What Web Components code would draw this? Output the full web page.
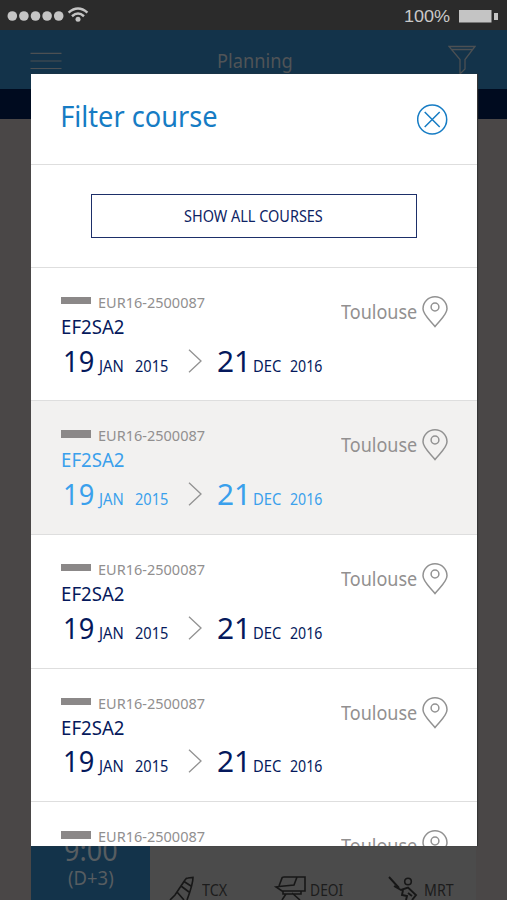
<!DOCTYPE html>
<html lang="en">

<head>
    <meta charset="utf-8">
    <meta name="viewport" content="width=device-width">
    <title>Planning</title>
    <style>
        body {
            margin: 0;
            height: 900px;
            overflow: hidden;
            font-family: "Noto Sans", "Open Sans", sans-serif;
            background: #4a4747;
        }
    </style>
</head>

<body>
    <planning-app></planning-app>

    <!-- Templates -->
    <template id="tmp-fit-text">
        <style>
            :host {
                display: inline-block;
                flex: none;
                line-height: 1;
                white-space: nowrap;
            }

            span {
                display: inline-block;
                transform-origin: 0 0;
            }
        </style>
        <span><slot></slot></span>
    </template>

    <template id="tmp-status">
        <style>
            :host {
                display: flex;
                justify-content: space-between;
                height: 30px;
                background: #2b2b2b;
                color: #c9c9c9;
                font-family: "Liberation Sans", Arial, sans-serif;
            }

            .right {
                display: flex;
                padding: 8px 9px 0 0;
                gap: 9px;
            }
        </style>
        <svg width="92" height="30" fill="#c4c4c4">
            <circle cx="12.3" cy="16" r="4.8" />
            <circle cx="23.9" cy="16" r="4.8" />
            <circle cx="35.5" cy="16" r="4.8" />
            <circle cx="47.1" cy="16" r="4.8" />
            <circle cx="58.7" cy="16" r="4.8" />
            <g fill="none" stroke="#c4c4c4" stroke-width="2.5">
                <path d="M68.6 12.6Q78 4.4 87.4 12.6" />
                <path d="M72 16.2Q78 10.8 84 16.2" />
            </g>
            <circle cx="78" cy="19.2" r="2.5" />
        </svg>
        <div class="right">
            <fit-text size="17" width="45">100%</fit-text>
            <svg width="39" height="16" fill="#c4c4c4">
                <rect y="2" width="32.5" height="12.5" />
                <rect x="35" y="5" width="4" height="7" />
            </svg>
        </div>
    </template>

    <template id="tmp-header">
        <style>
            :host {
                display: flex;
                justify-content: space-between;
                height: 59px;
                box-sizing: border-box;
                padding: 15px 31px 0 30px;
                background: #13334a;
                color: #505457;
            }

            fit-text {
                margin: 7px 1px 0 0;
            }

            svg {
                fill: none;
                stroke: #4c5053;
            }
        </style>
        <svg width="32" height="40">
            <path d="M.5 8.3H31.5M.5 16H31.5M.5 23.5H31.5" stroke-width="1.2" />
        </svg>
        <fit-text size="19" width="74">Planning</fit-text>
        <svg width="28" height="40" stroke-width="1.3">
            <path d="M1 1.5H27L17 14.5V24L12 29V14.5ZM3 4.5H25" />
        </svg>
    </template>

    <template id="tmp-agenda">
        <style>
            :host {
                display: flex;
                height: 65px;
                margin: 0 31px;
                background: #4b4b4b;
                color: #1c1c1c;
                overflow: hidden;
            }

            .time {
                display: flex;
                flex-direction: column;
                align-items: center;
                gap: 5px;
                width: 119px;
                background: #13334a;
                color: #575d61;
            }

            .crew {
                display: flex;
                flex: 1;
                padding: 39px 0 0 16px;
            }

            .crew fit-text {
                margin-top: 9px;
            }

            svg {
                fill: none;
                stroke: #171717;
                stroke-width: 1.6;
            }
        </style>
        <div class="time">
            <fit-text size="29" width="52">9:00</fit-text>
            <fit-text size="19" width="45">(D+3)</fit-text>
        </div>
        <div class="crew">
            <svg width="36" height="26">
                <path d="M4 26L9 21L19 6Q20 4 22 4L27 3.5Q27 10 21 26M18 7.5L25 12M15 12L23 18M11 18L18 26" />
            </svg>
            <fit-text size="15.5" width="26">TCX</fit-text>
            <svg width="83" height="26">
                <path d="M51 12L54 4Q54 3 56 3H77V17H74M69 3L66 11L51 12.5L48 13L54 17H77M55 17V20H73V17M58 20L54 26M64 19L72 26" />
            </svg>
            <fit-text size="15.5" width="32">DEOI</fit-text>
            <svg width="82" height="26">
                <circle cx="65" cy="7.5" r="3.3" />
                <path d="M46 3L56 14M51 12L58 16L65 13.5L73 21L69 26M60 16L59 21L64 22L63 26M65 19L69 22" stroke-width="1.9" />
            </svg>
            <fit-text size="15.5" width="29">MRT</fit-text>
        </div>
    </template>

    <template id="tmp-dialog">
        <style>
            :host {
                display: block;
                box-sizing: border-box;
                background: #fff;
                overflow: hidden;
                box-shadow: 1px 0 1px #353535;
            }

            header {
                display: flex;
                justify-content: space-between;
                box-sizing: border-box;
                height: 90.5px;
                padding: 27px 29px 0 31px;
                border-bottom: 1px solid #dedede;
                color: #167cc4;
            }

            svg {
                fill: none;
                stroke: #167cc4;
                stroke-width: 1.5;
                margin-top: 3px;
            }

            .action {
                box-sizing: border-box;
                height: 103.3px;
                padding: 29px 59.5px 0;
                border-bottom: 1px solid #dedede;
            }

            button {
                display: flex;
                justify-content: center;
                align-items: flex-start;
                box-sizing: border-box;
                width: 326px;
                height: 44.5px;
                padding: 13px 0 0;
                background: none;
                border: 1.5px solid #1d2f69;
                color: #0d2364;
                font: inherit;
            }
        </style>
        <header>
            <fit-text size="29.5" width="155">Filter course</fit-text>
            <svg width="31" height="31">
                <circle cx="15.2" cy="15.5" r="14.5" />
                <path d="M7.7 8L22.7 23M22.7 8L7.7 23" />
            </svg>
        </header>
        <div class="action">
            <button><fit-text size="16" width="139">SHOW ALL COURSES</fit-text></button>
        </div>
        <slot></slot>
    </template>

    <template id="tmp-course">
        <style>
            :host {
                display: flex;
                justify-content: space-between;
                box-sizing: border-box;
                height: 133.6px;
                padding: 27px 29px 0 30px;
                border-bottom: 1px solid #dedede;
                color: #05195c;
            }

            :host([selected]) {
                background: #f2f1f0;
                color: #3aa0ec;
            }

            .info {
                display: flex;
                flex-direction: column;
                align-items: flex-start;
            }

            .ref {
                display: flex;
                gap: 8px;
                color: #918f8f;
            }

            .ref i {
                width: 30px;
                height: 7.5px;
                margin-top: 2px;
                background: #8b8888;
            }

            .code {
                margin: 7px 0 10.5px 1px;
            }

            .dates {
                display: flex;
                align-items: baseline;
                padding-left: 3.5px;
            }

            .jan {
                margin: 0 12px 0 4.5px;
            }

            .dec {
                margin: 0 9px 0 8.5px;
            }

            svg {
                fill: none;
                stroke: #929292;
            }

            .arrow {
                align-self: flex-start;
                margin: 2px 15px 0 20px;
            }

            .place {
                display: flex;
                gap: 4.5px;
                color: #929090;
            }

            .place fit-text {
                margin-top: 7px;
            }

            .place svg {
                margin-top: 1px;
            }
        </style>
        <div class="info">
            <div class="ref"><i></i><fit-text size="15" width="105.5">EUR16-2500087</fit-text></div>
            <fit-text class="code" size="19.2" width="61.5">EF2SA2</fit-text>
            <div class="dates">
                <fit-text size="28.5" width="28">19</fit-text>
                <fit-text class="jan" size="15.5" width="26">JAN</fit-text>
                <fit-text size="15.5" width="32.5">2015</fit-text>
                <svg class="arrow" width="15" height="24">
                    <path d="M1 .7L13 12L1 23.3" stroke-width="1.3" />
                </svg>
                <fit-text size="28.5" width="27.5">21</fit-text>
                <fit-text class="dec" size="15.5" width="27.5">DEC</fit-text>
                <fit-text size="15.5" width="32.5">2016</fit-text>
            </div>
        </div>
        <div class="place">
            <fit-text size="20" width="76">Toulouse</fit-text>
            <svg width="26" height="32" stroke-width="1.5">
                <path d="M13 30.5C9 25 1 19 1 12.8A12 12 0 0 1 25 12.8C25 19 17 25 13 30.5Z" />
                <circle cx="13" cy="11" r="3.9" />
            </svg>
        </div>
    </template>

    <template id="tmp-app">
        <style>
            :host {
                display: flex;
                flex-direction: column;
                position: relative;
                height: 900px;
            }

            .band {
                height: 30px;
                background: #000b1f;
            }

            planning-agenda {
                margin-top: auto;
            }

            /* The dialog lies over the planning page */
            filter-dialog {
                position: absolute;
                left: 31px;
                top: 74px;
                width: 445.5px;
                height: 772px;
            }
        </style>
        <status-bar></status-bar>
        <planning-header></planning-header>
        <div class="band"></div>
        <planning-agenda></planning-agenda>
        <filter-dialog>
            <course-item></course-item>
            <course-item selected></course-item>
            <course-item></course-item>
            <course-item></course-item>
            <course-item></course-item>
        </filter-dialog>
    </template>

    <script>
        const ctx = document.createElement('canvas').getContext('2d')

        // Text whose drawn glyphs span exactly the given width
        class FitText extends HTMLElement {
            connectedCallback() {
                if (this.shadowRoot) return
                const shadow = this.attachShadow({ mode: 'open' })
                shadow.appendChild(document.getElementById('tmp-fit-text').content.cloneNode(true))

                const width = Number(this.getAttribute('width'))
                this.style.width = width + 'px'
                this.style.fontSize = this.getAttribute('size') + 'px'

                const family = getComputedStyle(this).fontFamily
                ctx.font = this.getAttribute('size') + 'px ' + family
                const m = ctx.measureText(this.textContent)
                const scale = width / (m.actualBoundingBoxLeft + m.actualBoundingBoxRight)
                const left = m.actualBoundingBoxLeft * scale
                shadow.querySelector('span').style.transform = `translateX(${left}px) scaleX(${scale})`
            }
        }

        // Elements that only clone their template
        const define = (name, tmp) => {
            customElements.define(name, class extends HTMLElement {
                connectedCallback() {
                    if (this.shadowRoot) return
                    const shadow = this.attachShadow({ mode: 'open' })
                    shadow.appendChild(document.getElementById(tmp).content.cloneNode(true))
                }
            })
        }

        customElements.define('fit-text', FitText)
        define('status-bar', 'tmp-status')
        define('planning-header', 'tmp-header')
        define('planning-agenda', 'tmp-agenda')
        define('course-item', 'tmp-course')
        define('filter-dialog', 'tmp-dialog')
        define('planning-app', 'tmp-app')
    </script>
</body>

</html>
